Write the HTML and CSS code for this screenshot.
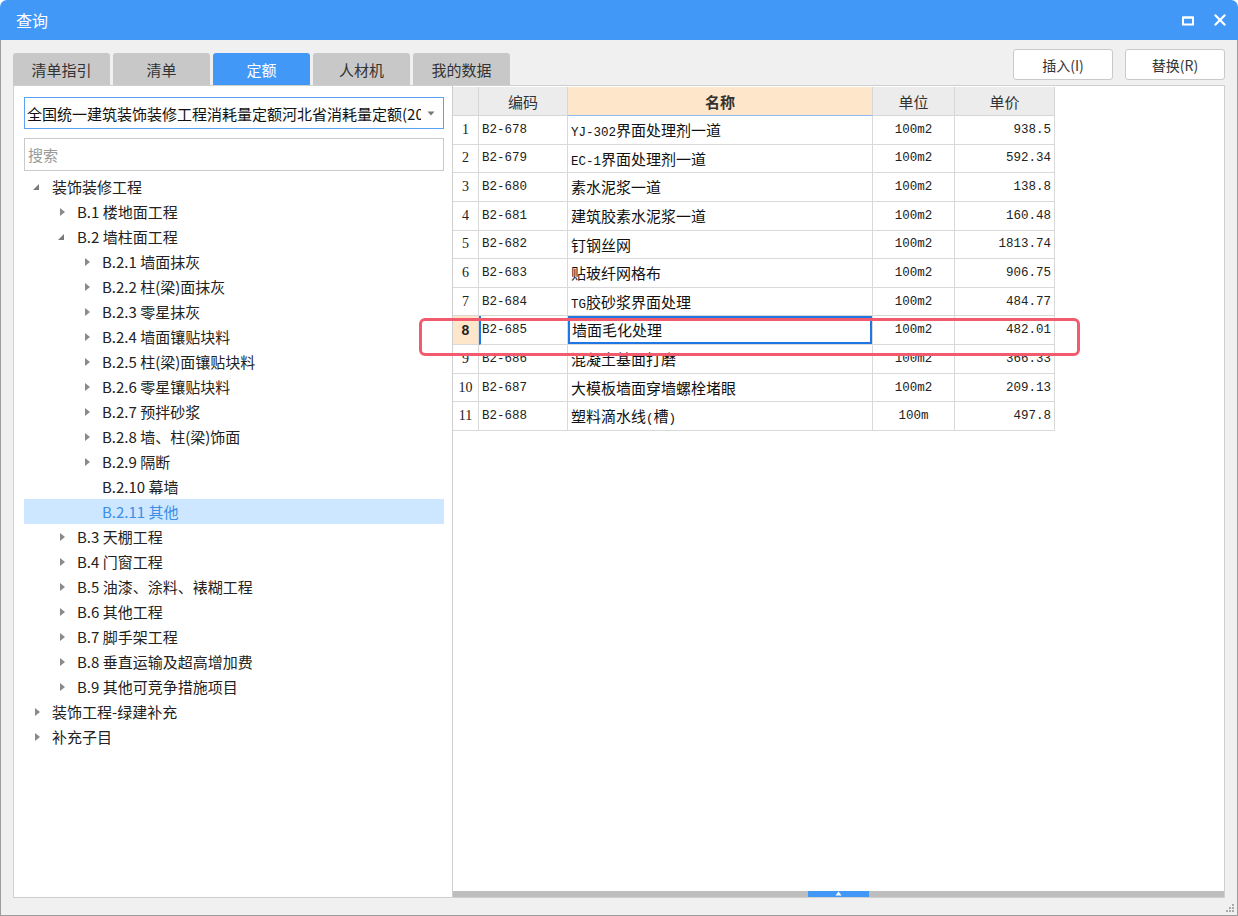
FILE: index.html
```html
<!DOCTYPE html>
<html lang="zh-CN">
<head>
<meta charset="utf-8">
<title>查询</title>
<link rel="stylesheet" href="styles.css">
</head>
<body>
<div class="window">
  <div class="titlebar">
    <span class="title">查询</span>
    <div class="win-ctrls">
      <svg class="ic-max" width="12" height="10" viewBox="0 0 12 10"><rect x="1" y="1.5" width="10" height="7" fill="none" stroke="#fff" stroke-width="2"/><rect x="1" y="0.5" width="10" height="2" fill="#fff"/></svg>
      <svg class="ic-close" width="12" height="12" viewBox="0 0 12 12"><path d="M1.5 1.5 L10.5 10.5 M10.5 1.5 L1.5 10.5" stroke="#fff" stroke-width="2.2" stroke-linecap="square"/></svg>
    </div>
  </div>
  <div class="body">
    <div class="toolbar">
      <div class="tabs">
        <div class="tab">清单指引</div>
        <div class="tab">清单</div>
        <div class="tab active">定额</div>
        <div class="tab">人材机</div>
        <div class="tab">我的数据</div>
      </div>
      <div class="actions">
        <button class="btn">插入(I)</button>
        <button class="btn">替换(R)</button>
      </div>
    </div>
    <div class="panes">
      <div class="left">
        <div class="combo">
          <span class="combo-text">全国统一建筑装饰装修工程消耗量定额河北省消耗量定额(2012)</span>
          <svg class="combo-arrow" width="8" height="5" viewBox="0 0 8 5"><path d="M0.5 0.5 L7.5 0.5 L4 4.5 Z" fill="#777"/></svg>
        </div>
        <div class="search">搜索</div>
        <ul class="tree">
          <li class="node l0"><span class="tw exp"></span>装饰装修工程</li>
          <li class="node l1"><span class="tw col"></span>B.1 楼地面工程</li>
          <li class="node l1"><span class="tw exp"></span>B.2 墙柱面工程</li>
          <li class="node l2"><span class="tw col"></span>B.2.1 墙面抹灰</li>
          <li class="node l2"><span class="tw col"></span>B.2.2 柱(梁)面抹灰</li>
          <li class="node l2"><span class="tw col"></span>B.2.3 零星抹灰</li>
          <li class="node l2"><span class="tw col"></span>B.2.4 墙面镶贴块料</li>
          <li class="node l2"><span class="tw col"></span>B.2.5 柱(梁)面镶贴块料</li>
          <li class="node l2"><span class="tw col"></span>B.2.6 零星镶贴块料</li>
          <li class="node l2"><span class="tw col"></span>B.2.7 预拌砂浆</li>
          <li class="node l2"><span class="tw col"></span>B.2.8 墙、柱(梁)饰面</li>
          <li class="node l2"><span class="tw col"></span>B.2.9 隔断</li>
          <li class="node l2"><span class="tw"></span>B.2.10 幕墙</li>
          <li class="node l2 selected"><span class="tw"></span>B.2.11 其他</li>
          <li class="node l1"><span class="tw col"></span>B.3 天棚工程</li>
          <li class="node l1"><span class="tw col"></span>B.4 门窗工程</li>
          <li class="node l1"><span class="tw col"></span>B.5 油漆、涂料、裱糊工程</li>
          <li class="node l1"><span class="tw col"></span>B.6 其他工程</li>
          <li class="node l1"><span class="tw col"></span>B.7 脚手架工程</li>
          <li class="node l1"><span class="tw col"></span>B.8 垂直运输及超高增加费</li>
          <li class="node l1"><span class="tw col"></span>B.9 其他可竞争措施项目</li>
          <li class="node l0"><span class="tw col"></span>装饰工程-绿建补充</li>
          <li class="node l0"><span class="tw col"></span>补充子目</li>
        </ul>
      </div>
      <div class="right">
        <div class="grid">
          <div class="hd rn"></div>
          <div class="hd">编码</div>
          <div class="hd hd-sel">名称</div>
          <div class="hd">单位</div>
          <div class="hd">单价</div>

          <div class="c rn">1</div><div class="c code">B2-678</div><div class="c name"><span class="m">YJ-302</span>界面处理剂一道</div><div class="c unit">100m2</div><div class="c price">938.5</div>
          <div class="c rn">2</div><div class="c code">B2-679</div><div class="c name"><span class="m">EC-1</span>界面处理剂一道</div><div class="c unit">100m2</div><div class="c price">592.34</div>
          <div class="c rn">3</div><div class="c code">B2-680</div><div class="c name">素水泥浆一道</div><div class="c unit">100m2</div><div class="c price">138.8</div>
          <div class="c rn">4</div><div class="c code">B2-681</div><div class="c name">建筑胶素水泥浆一道</div><div class="c unit">100m2</div><div class="c price">160.48</div>
          <div class="c rn">5</div><div class="c code">B2-682</div><div class="c name">钉钢丝网</div><div class="c unit">100m2</div><div class="c price">1813.74</div>
          <div class="c rn">6</div><div class="c code">B2-683</div><div class="c name">贴玻纤网格布</div><div class="c unit">100m2</div><div class="c price">906.75</div>
          <div class="c rn">7</div><div class="c code">B2-684</div><div class="c name"><span class="m">TG</span>胶砂浆界面处理</div><div class="c unit">100m2</div><div class="c price">484.77</div>
          <div class="c rn rn-sel">8</div><div class="c code code-sel">B2-685</div><div class="c name name-edit">墙面毛化处理</div><div class="c unit">100m2</div><div class="c price">482.01</div>
          <div class="c rn">9</div><div class="c code">B2-686</div><div class="c name">混凝土基面打磨</div><div class="c unit">100m2</div><div class="c price">366.33</div>
          <div class="c rn">10</div><div class="c code">B2-687</div><div class="c name">大模板墙面穿墙螺栓堵眼</div><div class="c unit">100m2</div><div class="c price">209.13</div>
          <div class="c rn">11</div><div class="c code">B2-688</div><div class="c name">塑料滴水线<span class="m">(</span>槽<span class="m">)</span></div><div class="c unit">100m</div><div class="c price">497.8</div>
        </div>
        <div class="hscroll">
          <div class="thumb"><svg width="7" height="5" viewBox="0 0 7 5"><path d="M3.5 0.5 L6.5 4.5 L0.5 4.5 Z" fill="#fff"/></svg></div>
        </div>
      </div>
    </div>
    <div class="footer">
      <svg class="grip" width="9" height="9" viewBox="0 0 9 9"><g fill="#a8a8a8"><rect x="6" y="0" width="2" height="2"/><rect x="3" y="3" width="2" height="2"/><rect x="6" y="3" width="2" height="2"/><rect x="0" y="6" width="2" height="2"/><rect x="3" y="6" width="2" height="2"/><rect x="6" y="6" width="2" height="2"/></g></svg>
    </div>
  </div>
  <div class="annot"></div>
</div>
</body>
</html>
```

FILE: styles.css
```css
* { box-sizing: border-box; }
html, body { margin: 0; padding: 0; }
body {
  width: 1238px;
  height: 916px;
  overflow: hidden;
  background: #fff;
  font-family: "Noto Sans CJK SC", "Noto Sans", sans-serif;
  color: #222;
}
.window {
  position: relative;
  width: 1238px;
  height: 916px;
  display: flex;
  flex-direction: column;
}
.titlebar {
  height: 40px;
  flex: none;
  background: #4298f7;
  border-radius: 7px 7px 0 0;
  display: flex;
  align-items: center;
  justify-content: space-between;
  padding: 0 12px 0 16px;
}
.title {
  color: #fff;
  font-size: 16px;
  line-height: 1;
}
.win-ctrls {
  display: flex;
  align-items: center;
  gap: 20px;
}
.ic-max { margin-top: 1px; }
.body {
  flex: 1;
  display: flex;
  flex-direction: column;
  background: #f0f0f0;
  border-left: 1px solid #9c9c9c;
  border-right: 1px solid #9c9c9c;
  border-bottom: 1px solid #9c9c9c;
  padding: 0 12px;
}
.toolbar {
  height: 45px;
  flex: none;
  display: flex;
  justify-content: space-between;
}
.tabs {
  display: flex;
  gap: 3px;
  align-items: flex-end;
}
.tab {
  width: 97px;
  height: 32px;
  background: #c8c8c8;
  border-radius: 3px 3px 0 0;
  display: flex;
  align-items: center;
  justify-content: center;
  font-size: 15px;
  color: #333;
}
.tab.active {
  background: #4298f7;
  color: #fff;
}
.actions {
  display: flex;
  gap: 12px;
  padding-top: 9px;
}
.btn {
  width: 100px;
  height: 31px;
  background: #fff;
  border: 1px solid #c9c9c9;
  border-radius: 3px;
  font-family: "Noto Sans CJK SC", "Noto Sans", sans-serif;
  font-size: 14px;
  color: #333;
  padding: 0;
}
.panes {
  height: 813px;
  flex: none;
  display: flex;
}
.left {
  width: 440px;
  flex: none;
  background: #fff;
  border: 1px solid #cfcfcf;
  padding: 11px 8px 0 10px;
  display: flex;
  flex-direction: column;
}
.combo {
  height: 32px;
  border: 1px solid #5aa3f3;
  display: flex;
  align-items: center;
  padding: 0 8px 0 2px;
  gap: 6px;
}
.combo-text {
  flex: 1;
  white-space: nowrap;
  overflow: hidden;
  font-size: 15px;
  color: #111;
}
.combo-arrow { flex: none; }
.search {
  margin-top: 9px;
  height: 33px;
  border: 1px solid #cacaca;
  display: flex;
  align-items: center;
  padding-left: 3px;
  font-size: 15px;
  color: #9a9a9a;
}
.tree {
  list-style: none;
  margin: 3px 0 0;
  padding: 0;
}
.node {
  height: 25px;
  display: flex;
  align-items: center;
  font-size: 15px;
  color: #222;
  white-space: nowrap;
}
.node.l0 { padding-left: 8px; }
.node.l1 { padding-left: 33px; }
.node.l2 { padding-left: 58px; }
.node.selected {
  background: #cce7ff;
  color: #3b8ee6;
}
.tw {
  width: 10px;
  height: 10px;
  margin-right: 10px;
  flex: none;
  position: relative;
}
.tw.col::before {
  content: "";
  position: absolute;
  left: 3px;
  top: 1px;
  border-style: solid;
  border-width: 4px 0 4px 5px;
  border-color: transparent transparent transparent #8a8a8a;
}
.tw.exp::before {
  content: "";
  position: absolute;
  left: 1px;
  top: 2px;
  border-style: solid;
  border-width: 0 0 6px 6px;
  border-color: transparent transparent #7a7a7a transparent;
}
.right {
  flex: 1;
  background: #fff;
  border-top: 1px solid #cfcfcf;
  border-right: 1px solid #cfcfcf;
  border-bottom: 1px solid #cfcfcf;
  display: flex;
  flex-direction: column;
  justify-content: space-between;
}
.grid {
  margin-top: 1px;
  display: grid;
  grid-template-columns: 26px 89px 305px 82px 100px;
  grid-template-rows: 29px;
  grid-auto-rows: 28.65px;
  width: 602px;
}
.hd {
  background: #ececec;
  border-right: 1px solid #d6d6d6;
  border-bottom: 1px solid #d6d6d6;
  display: flex;
  align-items: center;
  justify-content: center;
  font-size: 15px;
  color: #333;
}
.hd-sel {
  background: #fde6c9;
  font-weight: bold;
  border-bottom: 1px solid #8bb8ee;
}
.c {
  border-right: 1px solid #d9d9d9;
  border-bottom: 1px solid #d9d9d9;
  display: flex;
  align-items: center;
  white-space: nowrap;
  overflow: hidden;
}
.rn {
  background: #fff;
  justify-content: center;
  font-family: "Liberation Serif", serif;
  font-size: 14px;
  color: #222;
}
.hd.rn { background: #ececec; }
.rn-sel {
  background: #fde6c9;
  font-family: "Liberation Sans", sans-serif;
  font-weight: bold;
}
.code {
  padding-left: 3px;
  font-family: "Liberation Mono", monospace;
  font-size: 12.5px;
  color: #222;
}
.code-sel {
  border-left: 2px solid #1f77e6;
  padding-left: 1px;
}
.c.name {
  display: block;
  line-height: 27px;
  padding-left: 3px;
  font-size: 15px;
  color: #111;
}
.m {
  font-family: "Liberation Mono", monospace;
  font-size: 12.5px;
}
.c.name-edit {
  box-shadow: inset 0 0 0 2px #1f77e6;
  padding-left: 4px;
}
.unit {
  justify-content: center;
  font-family: "Liberation Mono", monospace;
  font-size: 12.5px;
  color: #222;
}
.price {
  justify-content: flex-end;
  padding-right: 3px;
  font-family: "Liberation Mono", monospace;
  font-size: 12.5px;
  color: #222;
}
.hscroll {
  height: 6px;
  background: #bdbdbd;
  position: relative;
  display: flex;
  padding-left: 355px;
}
.thumb {
  width: 61px;
  height: 6px;
  background: #4298f7;
  display: flex;
  align-items: flex-start;
  justify-content: center;
}
.footer {
  flex: 1;
  display: flex;
  justify-content: flex-end;
  align-items: flex-end;
  margin-right: -10px;
  padding-bottom: 2px;
}
.annot {
  position: absolute;
  left: 419px;
  top: 318px;
  width: 661px;
  height: 38px;
  border: 3px solid #f25a6d;
  border-radius: 6px;
  pointer-events: none;
}
```
